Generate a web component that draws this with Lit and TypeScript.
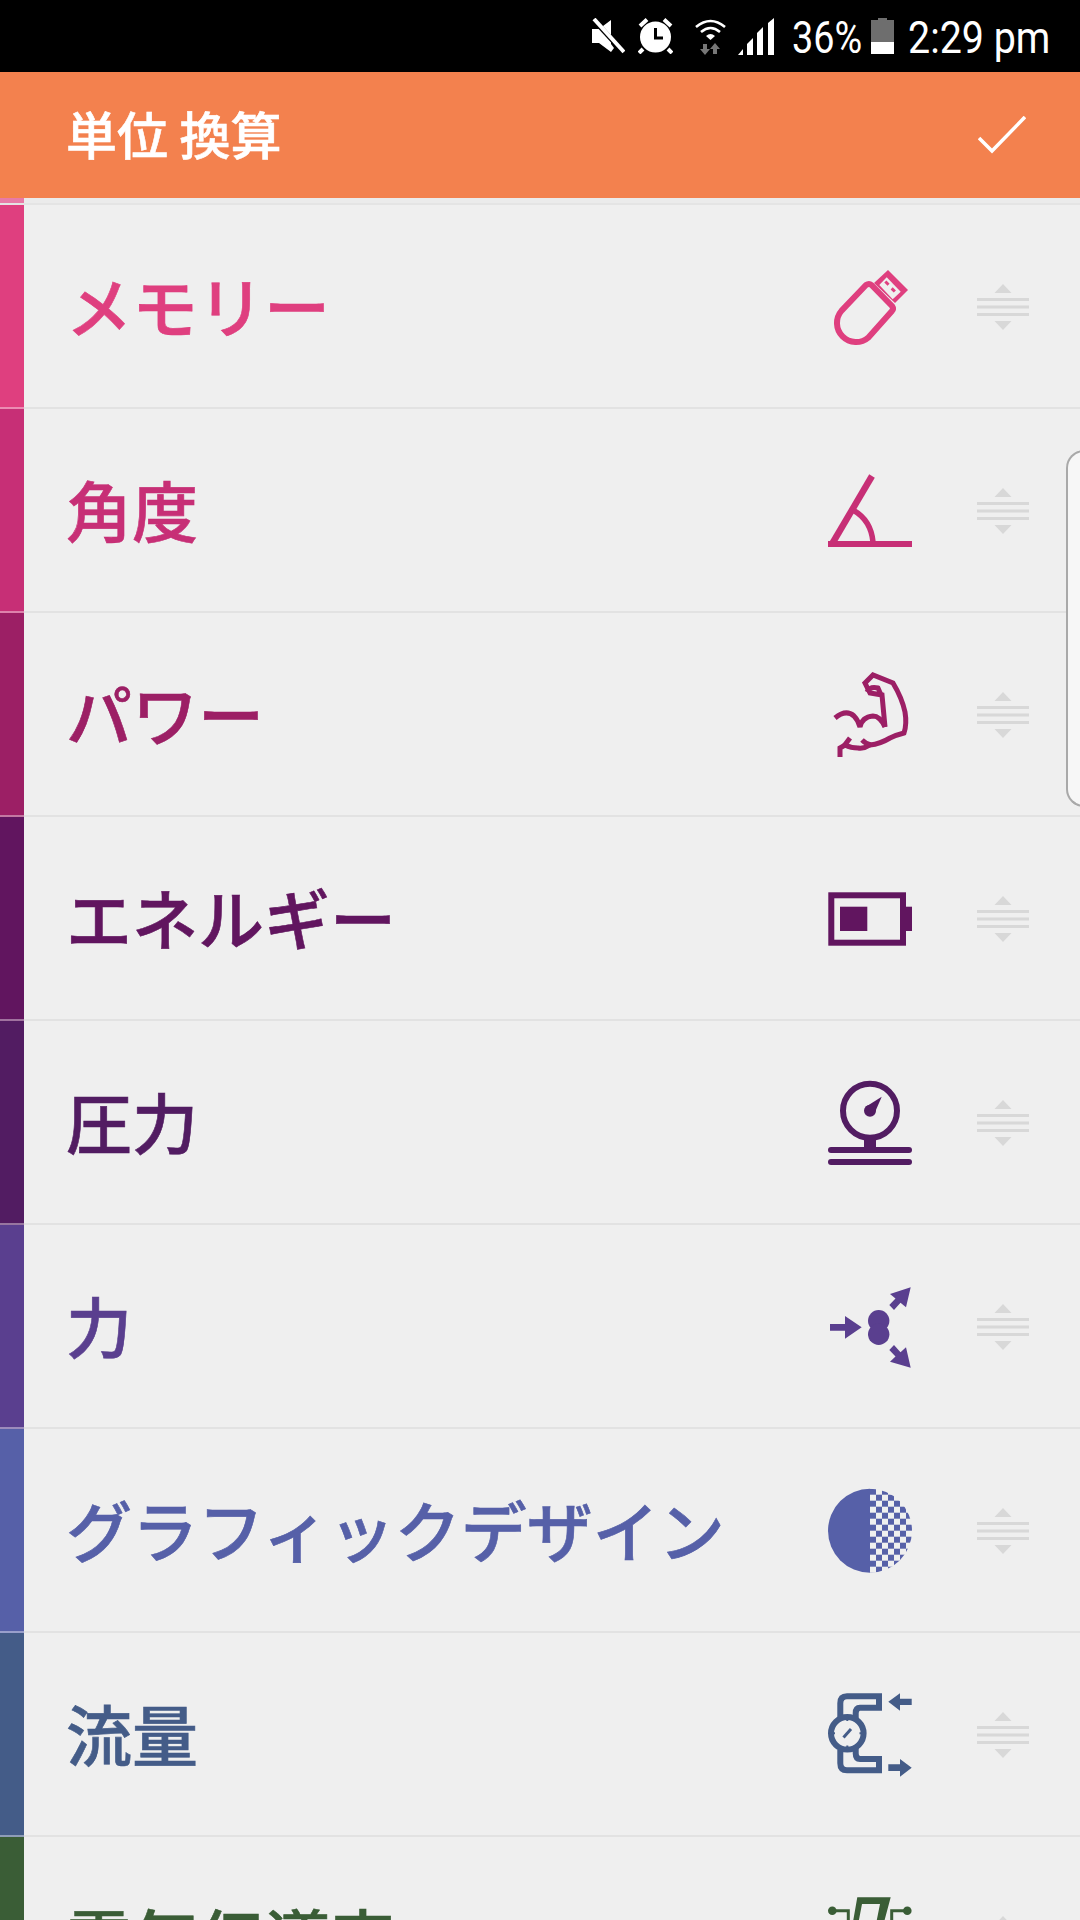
import { LitElement, html, css, svg } from "lit";
import { customElement } from "lit/decorators.js";

const usb = svg`
  <path fill="none" stroke="currentColor" stroke-width="6" stroke-linejoin="round" d="M13.600 46.600 L38 21 Q41 19 43.500 21 L64 42 Q66 45 64 47 L40.400 73.400 A19 19 0 0 1 13.600 46.600 Z"/>
  <polygon fill="currentColor" points="60,6 80,26 67,39 46,19"/>
  <polygon fill="#efefef" points="58.7,13.3 72.7,27.7 64.7,35.3 51.3,21"/>
  <rect fill="currentColor" x="56.5" y="17.5" width="4.5" height="3" transform="rotate(45 58.7 19.3)"/>
  <rect fill="currentColor" x="63" y="24.5" width="4.5" height="3" transform="rotate(45 65.3 26)"/>`;
const angle = svg`
  <rect fill="currentColor" x="0" y="73" width="84" height="6"/>
  <path fill="none" stroke="currentColor" stroke-width="6.500" d="M44 8 L4 76"/>
  <path fill="none" stroke="currentColor" stroke-width="5.500" d="M25 42 Q43 52 45 74"/>`;
const muscle = svg`
  <g fill="none" stroke="currentColor" stroke-width="5" stroke-linejoin="miter">
    <path d="M57 55 L54 23 L42 21 L37 11 L45 3 L65 11 Q74 26 77 40 Q79 52 76 61 Q68 63 62 66 Q52 72 42 73 Q36 77 30 76 Q23 76 17 73 L12 76 V85"/>
    <path d="M7 46 Q18 37 26 44 Q30 48 32 55 Q34 45 45 44 Q52 44 57 55"/>
    <path d="M22 66 L16 74"/>
    <path d="M34 68 Q38 72 43 73"/>
    <path d="M39 20 Q42 14 50 16 L53 23"/>
  </g>`;
const battery = svg`
  <rect fill="none" stroke="currentColor" stroke-width="6" x="3.3" y="19.3" width="71.7" height="47.4"/>
  <rect fill="currentColor" x="78" y="30.7" width="6" height="24.3"/>
  <rect fill="currentColor" x="12" y="30.7" width="27.3" height="24.3"/>`;
const gauge = svg`
  <circle fill="none" stroke="currentColor" stroke-width="6" cx="42" cy="30.7" r="27"/>
  <rect fill="currentColor" x="36" y="57" width="12" height="12"/>
  <rect fill="currentColor" x="0" y="67" width="84" height="6" rx="3"/>
  <rect fill="currentColor" x="0" y="79" width="84" height="6" rx="3"/>
  <circle fill="currentColor" cx="42" cy="30.7" r="6"/>
  <polygon fill="currentColor" points="37.5,27 53.7,16.7 46,34.5"/>`;
const force = svg`
  <circle fill="currentColor" cx="50.7" cy="36.7" r="10.7"/>
  <circle fill="currentColor" cx="50.7" cy="50.3" r="10.7"/>
  <polygon fill="currentColor" points="2,40 17,40 17,32 33.7,43.3 17,54.7 17,46.7 2,46.7"/>
  <polygon fill="currentColor" points="82.7,3.3 62,10 67.500,14.500 61.300,21 66,26 72.500,18.700 78,23.3"/>
  <polygon fill="currentColor" points="82.7,83.7 62,77.7 67.500,72.500 61.300,66 66,61 72.500,68.300 78,63.3"/>`;
const checker = svg`
  <defs>
    <pattern id="chk" x="42" y="36.7" width="12" height="12" patternUnits="userSpaceOnUse">
      <rect width="12" height="12" fill="#efefef"/>
      <rect fill="currentColor" x="0" y="0" width="6" height="6"/>
      <rect fill="currentColor" x="6" y="6" width="6" height="6"/>
    </pattern>
  </defs>
  <path fill="currentColor" d="M42 .7 A42 42 0 0 0 42 84.7 Z"/>
  <path fill="url(#chk)" d="M42 .7 A42 42 0 0 1 42 84.7 Z"/>`;
const flow = svg`
  <g fill="none" stroke="currentColor" stroke-width="6">
    <path d="M12.3 25 V11.3 Q12.3 4.3 19 4.3 H51 V15.7 H32 Q27.7 15.7 27.7 21.3 V27"/>
    <path d="M12.3 58 V71.3 Q12.3 78.3 19 78.3 H51 V67 H32 Q27.7 67 27.7 61.3 V56"/>
    <circle cx="19.3" cy="41.3" r="16.3"/>
  </g>
  <g stroke="currentColor" stroke-width="2" fill="none">
    <path d="M19.3 25 V29 M19.3 53.5 V57.5 M3 41.3 H7 M31.5 41.3 H35.5"/>
    <path stroke-width="3" d="M15.5 45.5 L23 37"/>
  </g>
  <polygon fill="currentColor" points="60.3,9.7 72,1.3 72,6.7 83.7,6.7 83.7,13 72,13 72,18.7"/>
  <polygon fill="currentColor" points="83.7,75.7 72,67 72,72.3 60.3,72.3 60.3,79 72,79 72,84.7"/>`;
const circuit = svg`
  <circle fill="currentColor" cx="4.3" cy="14.7" r="4.3"/>
  <circle fill="currentColor" cx="79.3" cy="14.7" r="4.3"/>
  <path fill="none" stroke="currentColor" stroke-width="3" d="M4 14.7 H20.3 V40 M80 14.7 H63.7 V40"/>
  <polygon fill="currentColor" points="29.3,1.3 62.7,1.3 55,30 43,60 36,60 48,28 52,8 34,8 24,60 19,60"/>`;

interface Item { label: string; color: string; icon: unknown; }
const items: Item[] = [
  { label: "メモリー", color: "#df3f7f", icon: usb },
  { label: "角度", color: "#c72f76", icon: angle },
  { label: "パワー", color: "#9c1f65", icon: muscle },
  { label: "エネルギー", color: "#61155f", icon: battery },
  { label: "圧力", color: "#521c62", icon: gauge },
  { label: "力", color: "#5a3f8f", icon: force },
  { label: "グラフィックデザイン", color: "#5660a8", icon: checker },
  { label: "流量", color: "#445c88", icon: flow },
  { label: "電気伝導率", color: "#3a5d36", icon: circuit },
];

@customElement("app-root")
export class AppRoot extends LitElement {
  static styles = css`
    :host {
      display: block;
      width: 1080px;
      height: 1920px;
      overflow: hidden;
      position: relative;
      background: #efefef;
      font-family: "Noto Sans CJK JP", "Noto Sans", sans-serif;
    }
    .status {
      height: 72px;
      background: #000;
      color: #fff;
      display: flex;
      align-items: center;
      justify-content: flex-end;
      padding-right: 33px;
      box-sizing: border-box;
      font-family: Roboto, sans-serif;
      font-size: 45px;
    }
    .status svg { display: block; flex: none; }
    .s-mute { margin-right: 13px; }
    .s-alarm { margin-right: 22px; }
    .s-wifi { margin-right: 12px; }
    .s-signal { margin-right: 17px; }
    .s-batt { margin-right: 14px; }
    .squeeze { display: block; flex: none; line-height: 72px; white-space: nowrap; transform-origin: left center; padding-top: 3px; }
    .pct-box { width: 68px; margin-right: 11px; }
    .time-box { width: 139px; }
    .pct-box .squeeze { transform: scaleX(0.84); }
    .time-box .squeeze { transform: scaleX(0.875); }
    .header {
      height: 126px;
      background: #f3814e;
      display: flex;
      align-items: center;
      justify-content: space-between;
      padding: 0 54px 0 66px;
      box-sizing: border-box;
      color: #fff;
    }
    .title { font-size: 51px; font-weight: 500; -webkit-text-stroke: 0.600px #fff; line-height: 1; padding-bottom: 3px; }
    .check { display: block; }
    .sliver {
      height: 7px;
      box-sizing: border-box;
      display: flex;
      border-bottom: 2px solid #e4e4e4;
      background: #ebebeb;
    }
    .sliver i { width: 24px; background: #e87aa6; display: block; }
    .row {
      height: 204px;
      box-sizing: border-box;
      display: flex;
      align-items: center;
      position: relative;
      border-bottom: 2px solid #e2e2e2;
    }
    .strip {
      position: absolute;
      left: 0;
      top: 0;
      bottom: -2px;
      width: 24px;
      border-bottom: 2px solid #ffffff66;
      box-sizing: border-box;
    }
    .label {
      flex: 1;
      padding-left: 66px;
      padding-bottom: 5px;
      font-size: 66px;
      font-weight: 500;
      -webkit-text-stroke: 0.600px currentColor;
      line-height: 1;
      white-space: nowrap;
    }
    .icon { width: 84px; height: 84px; overflow: visible; display: block; flex: none; }
    .handle { display: block; flex: none; margin: 2px 51px 0 65px; }
    .edge {
      position: absolute;
      right: -4px;
      top: 450px;
      width: 18px;
      height: 357px;
      box-sizing: border-box;
      background: #f7f7f7;
      border: 2px solid #a9a9a9;
      border-radius: 20px 0 0 20px;
    }
  `;

  render() {
    return html`
      <div class="status">
        <svg class="s-mute" width="33" height="36" viewBox="0 0 33 36">
          <path fill="#fff" d="M0 11 H7 L19 2 V26 L22 30 L19 34 L7 25 H0 Z"/>
          <path stroke="#000" stroke-width="5" d="M0 0 L33 36"/>
          <path stroke="#fff" stroke-width="4" d="M2 1 L32 34"/>
        </svg>
        <svg class="s-alarm" width="35" height="36" viewBox="0 0 35 36">
          <circle cx="17.5" cy="19" r="15.5" fill="#fff"/>
          <path fill="none" stroke="#000" stroke-width="3" d="M17.5 10 V20 H25"/>
          <path stroke="#fff" stroke-width="4" d="M2 8 L9 1.5 M33 8 L26 1.5 M5 31 L1 35 M30 31 L34 35"/>
        </svg>
        <svg class="s-wifi" width="31" height="37" viewBox="0 0 31 37">
          <path fill="none" stroke="#fff" stroke-width="2.6" d="M1 9 Q15.500 -3 30 9"/>
          <path fill="none" stroke="#fff" stroke-width="2.6" d="M6 14 Q15.500 6 25 14"/>
          <path fill="#fff" d="M11 18 Q15.500 14 20 18 L15.500 22 Z"/>
          <path fill="#777" d="M8 26 H12 V31 H15 L10 37 L5 31 H8 Z M20 25 L25 31 H22 V36 H18 V31 H15 Z"/>
        </svg>
        <svg class="s-signal" width="37" height="37" viewBox="0 0 37 37">
          <polygon fill="#fff" points="0,37 5,31 5,37"/>
          <polygon fill="#fff" points="9,37 9,26 15,20 15,37"/>
          <polygon fill="#fff" points="19,37 19,15 25,9 25,37"/>
          <polygon fill="#fff" points="30,37 30,5 36,0 36,37"/>
        </svg>
        <div class="pct-box"><span class="squeeze">36%</span></div>
        <svg class="s-batt" width="23" height="36" viewBox="0 0 23 36">
          <path fill="#6e6e6e" d="M7 0 H16 V2 H23 V24 H0 V2 H7 Z"/>
          <rect fill="#fff" x="0" y="24" width="23" height="12"/>
        </svg>
        <div class="time-box"><span class="squeeze">2:29 pm</span></div>
      </div>
      <div class="header">
        <div class="title">単位 換算</div>
        <svg class="check" width="48" height="38" viewBox="0 0 48 38">
          <path fill="none" stroke="#fff" stroke-width="3.6" d="M1 22 L14 35 L47 1"/>
        </svg>
      </div>
      <div class="sliver"><i></i></div>
      ${items.map(
        (it) => html`
          <div class="row">
            <div class="strip" style="background:${it.color}"></div>
            <div class="label" style="color:${it.color}">${it.label}</div>
            <svg class="icon" viewBox="0 0 84 84" style="color:${it.color}">${it.icon}</svg>
            <svg class="handle" width="52" height="46" viewBox="0 0 52 46">
              <g fill="#d8d8d8">
                <polygon points="26,0 34.500,9 17.500,9"/>
                <rect x="0" y="14" width="52" height="3"/>
                <rect x="0" y="21.500" width="52" height="3"/>
                <rect x="0" y="29" width="52" height="3"/>
                <polygon points="26,46 34.500,37 17.500,37"/>
              </g>
            </svg>
          </div>
        `
      )}
      <div class="edge"></div>
    `;
  }
}
